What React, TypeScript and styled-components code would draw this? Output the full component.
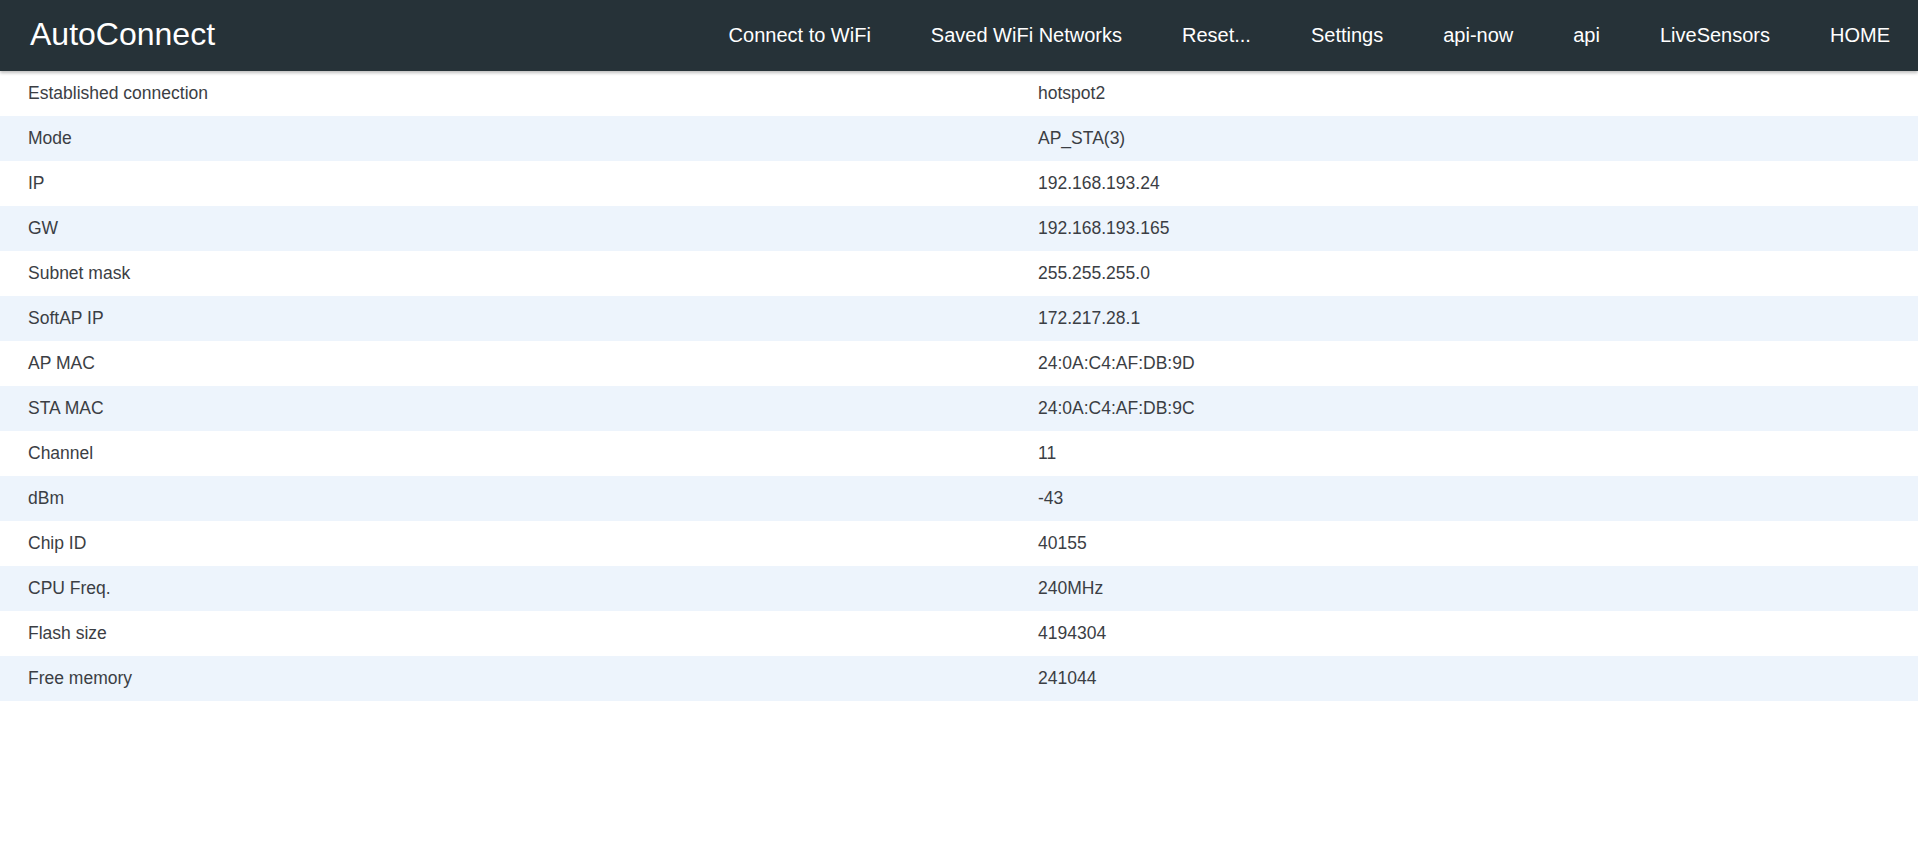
import React from "react";
import styled, { createGlobalStyle } from "styled-components";

const Global = createGlobalStyle`
  html, body { margin: 0; padding: 0; background: #fff; }
  body { font-family: "Liberation Sans", Arial, sans-serif; }
`;

const Header = styled.header`
  height: 71px;
  background: #263238;
  display: flex;
  align-items: center;
  justify-content: space-between;
  padding: 0 28px 0 30px;
  box-shadow: 0 2px 3px rgba(0, 0, 0, 0.25);
  position: relative;
  z-index: 1;
`;

const Brand = styled.div`
  color: #fff;
  font-size: 32px;
  line-height: 1;
  margin-top: -3px;
`;

const Nav = styled.nav`
  display: flex;
  align-items: center;
  gap: 60px;
`;

const NavItem = styled.a`
  color: #fff;
  font-size: 20px;
  line-height: 1;
  text-decoration: none;
  margin-top: -2px;
  white-space: nowrap;
`;

const Table = styled.div`
  display: grid;
  grid-template-columns: 1010px 1fr;
`;

const Cell = styled.div<{ $odd: boolean }>`
  height: 45px;
  display: flex;
  align-items: center;
  padding-left: 28px;
  background: ${(p) => (p.$odd ? "#edf4fc" : "#fff")};
  color: #3b3e44;
  font-size: 17.5px;
`;

const rows: [string, string][] = [
  ["Established connection", "hotspot2"],
  ["Mode", "AP_STA(3)"],
  ["IP", "192.168.193.24"],
  ["GW", "192.168.193.165"],
  ["Subnet mask", "255.255.255.0"],
  ["SoftAP IP", "172.217.28.1"],
  ["AP MAC", "24:0A:C4:AF:DB:9D"],
  ["STA MAC", "24:0A:C4:AF:DB:9C"],
  ["Channel", "11"],
  ["dBm", "-43"],
  ["Chip ID", "40155"],
  ["CPU Freq.", "240MHz"],
  ["Flash size", "4194304"],
  ["Free memory", "241044"],
];

const navItems = [
  "Connect to WiFi",
  "Saved WiFi Networks",
  "Reset...",
  "Settings",
  "api-now",
  "api",
  "LiveSensors",
  "HOME",
];

export default function App() {
  return (
    <>
      <Global />
      <Header>
        <Brand>AutoConnect</Brand>
        <Nav>
          {navItems.map((n) => (
            <NavItem key={n} href="#">
              {n}
            </NavItem>
          ))}
        </Nav>
      </Header>
      <Table>
        {rows.map(([k, v], i) => (
          <React.Fragment key={k}>
            <Cell $odd={i % 2 === 1}>{k}</Cell>
            <Cell $odd={i % 2 === 1}>{v}</Cell>
          </React.Fragment>
        ))}
      </Table>
    </>
  );
}
